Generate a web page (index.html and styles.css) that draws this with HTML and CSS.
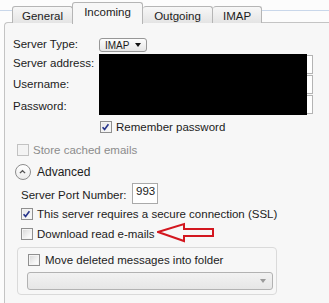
FILE: index.html
```html
<!DOCTYPE html>
<html>
<head>
<meta charset="utf-8">
<link rel="stylesheet" href="styles.css">
</head>
<body>
<div class="tabs">
  <div class="tab t-general">General</div>
  <div class="tab t-incoming active">Incoming</div>
  <div class="tab t-outgoing">Outgoing</div>
  <div class="tab t-imap">IMAP</div>
</div>
<div class="panel">
  <div class="grid">
    <div class="lbl r1">Server Type:</div>
    <div class="cell r1"><span class="select-imap">IMAP <span class="tri"></span></span></div>
    <div class="lbl r2">Server address:</div>
    <div class="cell r2"><span class="input"></span></div>
    <div class="lbl r3">Username:</div>
    <div class="cell r3"><span class="input"></span></div>
    <div class="lbl r4">Password:</div>
    <div class="cell r4"><span class="input"></span></div>
    <div class="redact"></div>
  </div>
  <div class="row remember"><span class="cb checked"><svg viewBox="0 0 12 12" width="12" height="12"><path d="M2.8 6.2 L5 8.6 L9.2 3" fill="none" stroke="#26348a" stroke-width="1.8"/></svg></span><span>Remember password</span></div>
  <div class="row store disabled"><span class="cb dis"></span><span>Store cached emails</span></div>
  <div class="row advanced"><span class="circ"><svg viewBox="0 0 16 16" width="16" height="16"><path d="M5.2 9.2 L8 6.6 L10.8 9.2" fill="none" stroke="#555" stroke-width="1.4"/></svg></span><span class="adv-text">Advanced</span></div>
  <div class="row port ind"><span class="port-lbl">Server Port Number:</span><span class="port-input">993</span></div>
  <div class="row ind"><span class="cb checked"><svg viewBox="0 0 12 12" width="12" height="12"><path d="M2.8 6.2 L5 8.6 L9.2 3" fill="none" stroke="#26348a" stroke-width="1.8"/></svg></span><span>This server requires a secure connection (SSL)</span></div>
  <div class="row ind"><span class="cb"></span><span>Download read e-mails</span><svg class="arrow" viewBox="0 0 60 22" width="60" height="22"><polygon points="1,10 27,2 27,7 56,7 56,14 27,14 27,19" fill="none" stroke="#d3171f" stroke-width="2" stroke-linejoin="miter"/></svg></div>
  <div class="fieldset">
    <div class="row"><span class="cb"></span><span>Move deleted messages into folder</span></div>
    <div class="folder-select"><span class="tri grey"></span></div>
  </div>
</div>
</body>
</html>
```
FILE: styles.css
```css
* { box-sizing: border-box; }
html, body { margin: 0; padding: 0; }
body {
  width: 329px;
  height: 303px;
  overflow: hidden;
  background: #fcfcfc;
  font-family: "Liberation Sans", Arial, sans-serif;
  font-size: 11.5px;
  color: #1c1c1c;
}
.tabs {
  display: flex;
  align-items: flex-end;
  height: 23px;
  padding-left: 12px;
  position: relative;
  z-index: 2;
  background: linear-gradient(to bottom, transparent 10px, #c9d7ea 10px, #c9d7ea 11px, transparent 11px);
}
.tab {
  height: 17px;
  border: 1px solid #b5b5b5;
  border-bottom: none;
  border-left: none;
  border-radius: 3px 3px 0 0;
  background: linear-gradient(to bottom, #f7f7f7, #e4e4e4);
  display: flex;
  justify-content: center;
  align-items: center;
  padding-top: 2px;
}
.t-general { width: 61px; border-left: 1px solid #b5b5b5; }
.t-incoming { width: 70px; }
.t-outgoing { width: 70px; }
.t-imap { width: 49px; }
.tab.active {
  height: 22px;
  background: #f7f7f7;
  border-left: 1px solid #b5b5b5;
  margin-left: -1px;
  width: 71px;
  padding-top: 0;
  padding-bottom: 4px;
  margin-bottom: -1px;
}
.panel {
  margin-left: 4px;
  border-left: 1px solid #c4c4c4;
  border-top: 1px solid #c4c4c4;
  border-top-left-radius: 4px;
  margin-top: -1px;
  background: #f7f7f7;
  height: 290px;
  padding: 11px 0 0 8px;
}
.grid {
  display: grid;
  grid-template-columns: 86px 214px;
  grid-template-rows: 20px 20px 20px 20px;
}
.lbl { display: flex; align-items: center; grid-column: 1; }
.cell { display: flex; align-items: center; grid-column: 2; }
.r1 { grid-row: 1; }
.r2 { grid-row: 2; }
.r3 { grid-row: 3; }
.r4 { grid-row: 4; }
.r2.lbl { padding-bottom: 2px; }
.r4.lbl { padding-top: 3px; }
.select-imap {
  width: 48px;
  height: 14px;
  margin-top: 2px;
  border: 1px solid #979797;
  border-radius: 3px;
  background: linear-gradient(to bottom, #fdfdfd, #e6e6e6);
  font-size: 10px;
  display: flex;
  align-items: center;
  padding-left: 5px;
  gap: 6px;
}
.tri {
  width: 0; height: 0;
  border-left: 3.5px solid transparent;
  border-right: 3.5px solid transparent;
  border-top: 4px solid #111;
}
.tri.grey { border-top-color: #9a9a9a; }
.input {
  width: 214px;
  height: 19px;
  border: 1px solid #b4b4b4;
  background: #fff;
}
.redact {
  grid-column: 2;
  grid-row: 2 / 5;
  width: 208px;
  height: 61px;
  background: #000;
  z-index: 1;
}
.row {
  display: flex;
  align-items: center;
  height: 20px;
  gap: 4px;
}
.remember { margin-top: 3px; padding-left: 87px; }
.store { margin-top: 3px; padding-left: 4px; }
.disabled { color: #8c8c8c; }
.advanced { margin-top: 2px; padding-left: 2px; gap: 6px; }
.adv-text { font-size: 12px; }
.ind { padding-left: 8px; }
.port { height: 21px; margin-top: 1px; gap: 0; }
.port-lbl { width: 111px; padding-top: 2px; }
.port-input {
  width: 26px;
  height: 21px;
  border: 1px solid #aaa;
  background: #fff;
  padding: 1px 0 0 3px;
  align-self: stretch;
}
.cb {
  width: 12px;
  height: 12px;
  border: 1px solid #8f8f8f;
  background: linear-gradient(135deg, #d6d6d6, #f7f7f7 70%, #fff);
  display: inline-flex;
  flex: none;
  box-shadow: inset 0 0 0 1px #f4f4f4;
}
.cb svg { display: block; margin: -1px 0 0 -1px; }
.cb.checked { background: linear-gradient(135deg, #e6e6e6, #fbfbfb); }
.cb.dis { border-color: #c2c2c2; background: #f3f3f3; }
.circ {
  width: 16px;
  height: 16px;
  border-radius: 50%;
  border: 1px solid #8d8d8d;
  background: linear-gradient(to bottom, #ffffff, #ececec);
  display: inline-flex;
  flex: none;
}
.circ svg { display: block; margin: -1px 0 0 -1px; }
.arrow { margin-left: -2px; flex: none; margin-top: -3px; }
.fieldset {
  margin-left: 4px;
  margin-top: 3px;
  width: 260px;
  height: 48px;
  border: 1px solid #dadada;
  border-radius: 4px;
  padding: 2px 4px 0 10px;
}
.fieldset .row { gap: 5px; }
.folder-select {
  margin-top: 2px;
  margin-left: -1px;
  width: 246px;
  height: 18px;
  border: 1px solid #b2b2b2;
  border-radius: 3px;
  background: linear-gradient(to bottom, #f2f2f2, #e6e6e6);
  display: flex;
  align-items: center;
  justify-content: flex-end;
  padding-right: 6px;
}
```
